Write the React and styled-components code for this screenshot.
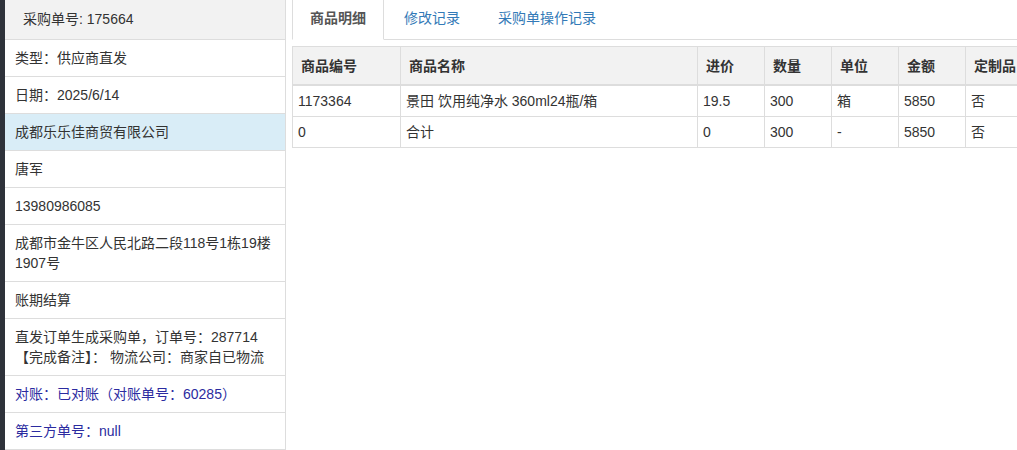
import React from 'react';
import styled, { createGlobalStyle } from 'styled-components';

const GlobalStyle = createGlobalStyle`
  body {
    margin: 0;
    background: #fff;
    font-family: "Liberation Sans", "Noto Sans CJK SC", sans-serif;
    font-size: 14px;
    color: #333;
  }
`;

const Page = styled.div`
  display: flex;
  height: 450px;
  overflow: hidden;
`;

const SideStrip = styled.div`
  flex: 0 0 5px;
  background: #2e323a;
`;

const InfoPanel = styled.ul`
  flex: 0 0 280px;
  margin: 0;
  padding: 0;
  list-style: none;
  border-right: 1px solid #ddd;
`;

const InfoHead = styled.li`
  height: 39px;
  line-height: 39px;
  padding: 0 18px;
  background: #f2f2f2;
  border-bottom: 1px solid #ddd;
`;

const InfoRow = styled.li`
  padding: 8px 10px;
  line-height: 20px;
  border-bottom: 1px solid #ddd;
  background: ${(p) => (p.$active ? '#d9edf7' : '#fff')};
  color: ${(p) => (p.$link ? '#2b2ba0' : '#333')};
`;

const Main = styled.div`
  flex: 1;
  min-width: 0;
  padding-left: 6px;
  overflow: hidden;
`;

const Tabs = styled.ul`
  display: flex;
  margin: 0;
  padding: 0;
  list-style: none;
  border-bottom: 1px solid #ddd;
`;

const Tab = styled.li`
  margin-right: 2px;
  margin-bottom: -1px;
  padding: 8px 17px 11px;
  line-height: 20px;
  border: 1px solid ${(p) => (p.$active ? '#ddd' : 'transparent')};
  border-top: none;
  border-bottom-color: ${(p) => (p.$active ? '#fff' : 'transparent')};
  background: ${(p) => (p.$active ? '#fff' : 'transparent')};
  color: ${(p) => (p.$active ? '#555' : '#337ab7')};
  font-weight: ${(p) => (p.$active ? 600 : 400)};
  white-space: nowrap;
`;

const Table = styled.table`
  margin-top: 6px;
  border-collapse: collapse;
  table-layout: fixed;
  width: 754px;
`;

const Th = styled.th`
  padding: 9px 8px 8px;
  line-height: 20px;
  text-align: left;
  font-weight: bold;
  background: #f2f2f2;
  border: 1px solid #ddd;
  border-bottom-width: 2px;
  white-space: nowrap;
`;

const Td = styled.td`
  padding: 5px;
  line-height: 20px;
  border: 1px solid #ddd;
  white-space: nowrap;
`;

const columns = [
  { label: '商品编号', width: 108 },
  { label: '商品名称', width: 297 },
  { label: '进价', width: 67 },
  { label: '数量', width: 67 },
  { label: '单位', width: 67 },
  { label: '金额', width: 67 },
  { label: '定制品', width: 81 },
];

const rows = [
  ['1173364', '景田 饮用纯净水 360ml24瓶/箱', '19.5', '300', '箱', '5850', '否'],
  ['0', '合计', '0', '300', '-', '5850', '否'],
];

const App = () => {
  return (
    <>
      <GlobalStyle />
      <Page>
        <SideStrip />
        <InfoPanel>
          <InfoHead>采购单号: 175664</InfoHead>
          <InfoRow>类型：供应商直发</InfoRow>
          <InfoRow>日期：2025/6/14</InfoRow>
          <InfoRow $active>成都乐乐佳商贸有限公司</InfoRow>
          <InfoRow>唐军</InfoRow>
          <InfoRow>13980986085</InfoRow>
          <InfoRow>成都市金牛区人民北路二段118号1栋19楼1907号</InfoRow>
          <InfoRow>账期结算</InfoRow>
          <InfoRow>
            直发订单生成采购单，订单号：287714
            <br />
            【完成备注】： 物流公司：商家自已物流
          </InfoRow>
          <InfoRow $link>对账：已对账（对账单号：60285）</InfoRow>
          <InfoRow $link>第三方单号：null</InfoRow>
        </InfoPanel>
        <Main>
          <Tabs>
            <Tab $active>商品明细</Tab>
            <Tab>修改记录</Tab>
            <Tab>采购单操作记录</Tab>
          </Tabs>
          <Table>
            <colgroup>
              {columns.map((c) => (
                <col key={c.label} style={{ width: c.width }} />
              ))}
            </colgroup>
            <thead>
              <tr>
                {columns.map((c) => (
                  <Th key={c.label}>{c.label}</Th>
                ))}
              </tr>
            </thead>
            <tbody>
              {rows.map((r, i) => (
                <tr key={i}>
                  {r.map((cell, j) => (
                    <Td key={j}>{cell}</Td>
                  ))}
                </tr>
              ))}
            </tbody>
          </Table>
        </Main>
      </Page>
    </>
  );
};

export default App;
